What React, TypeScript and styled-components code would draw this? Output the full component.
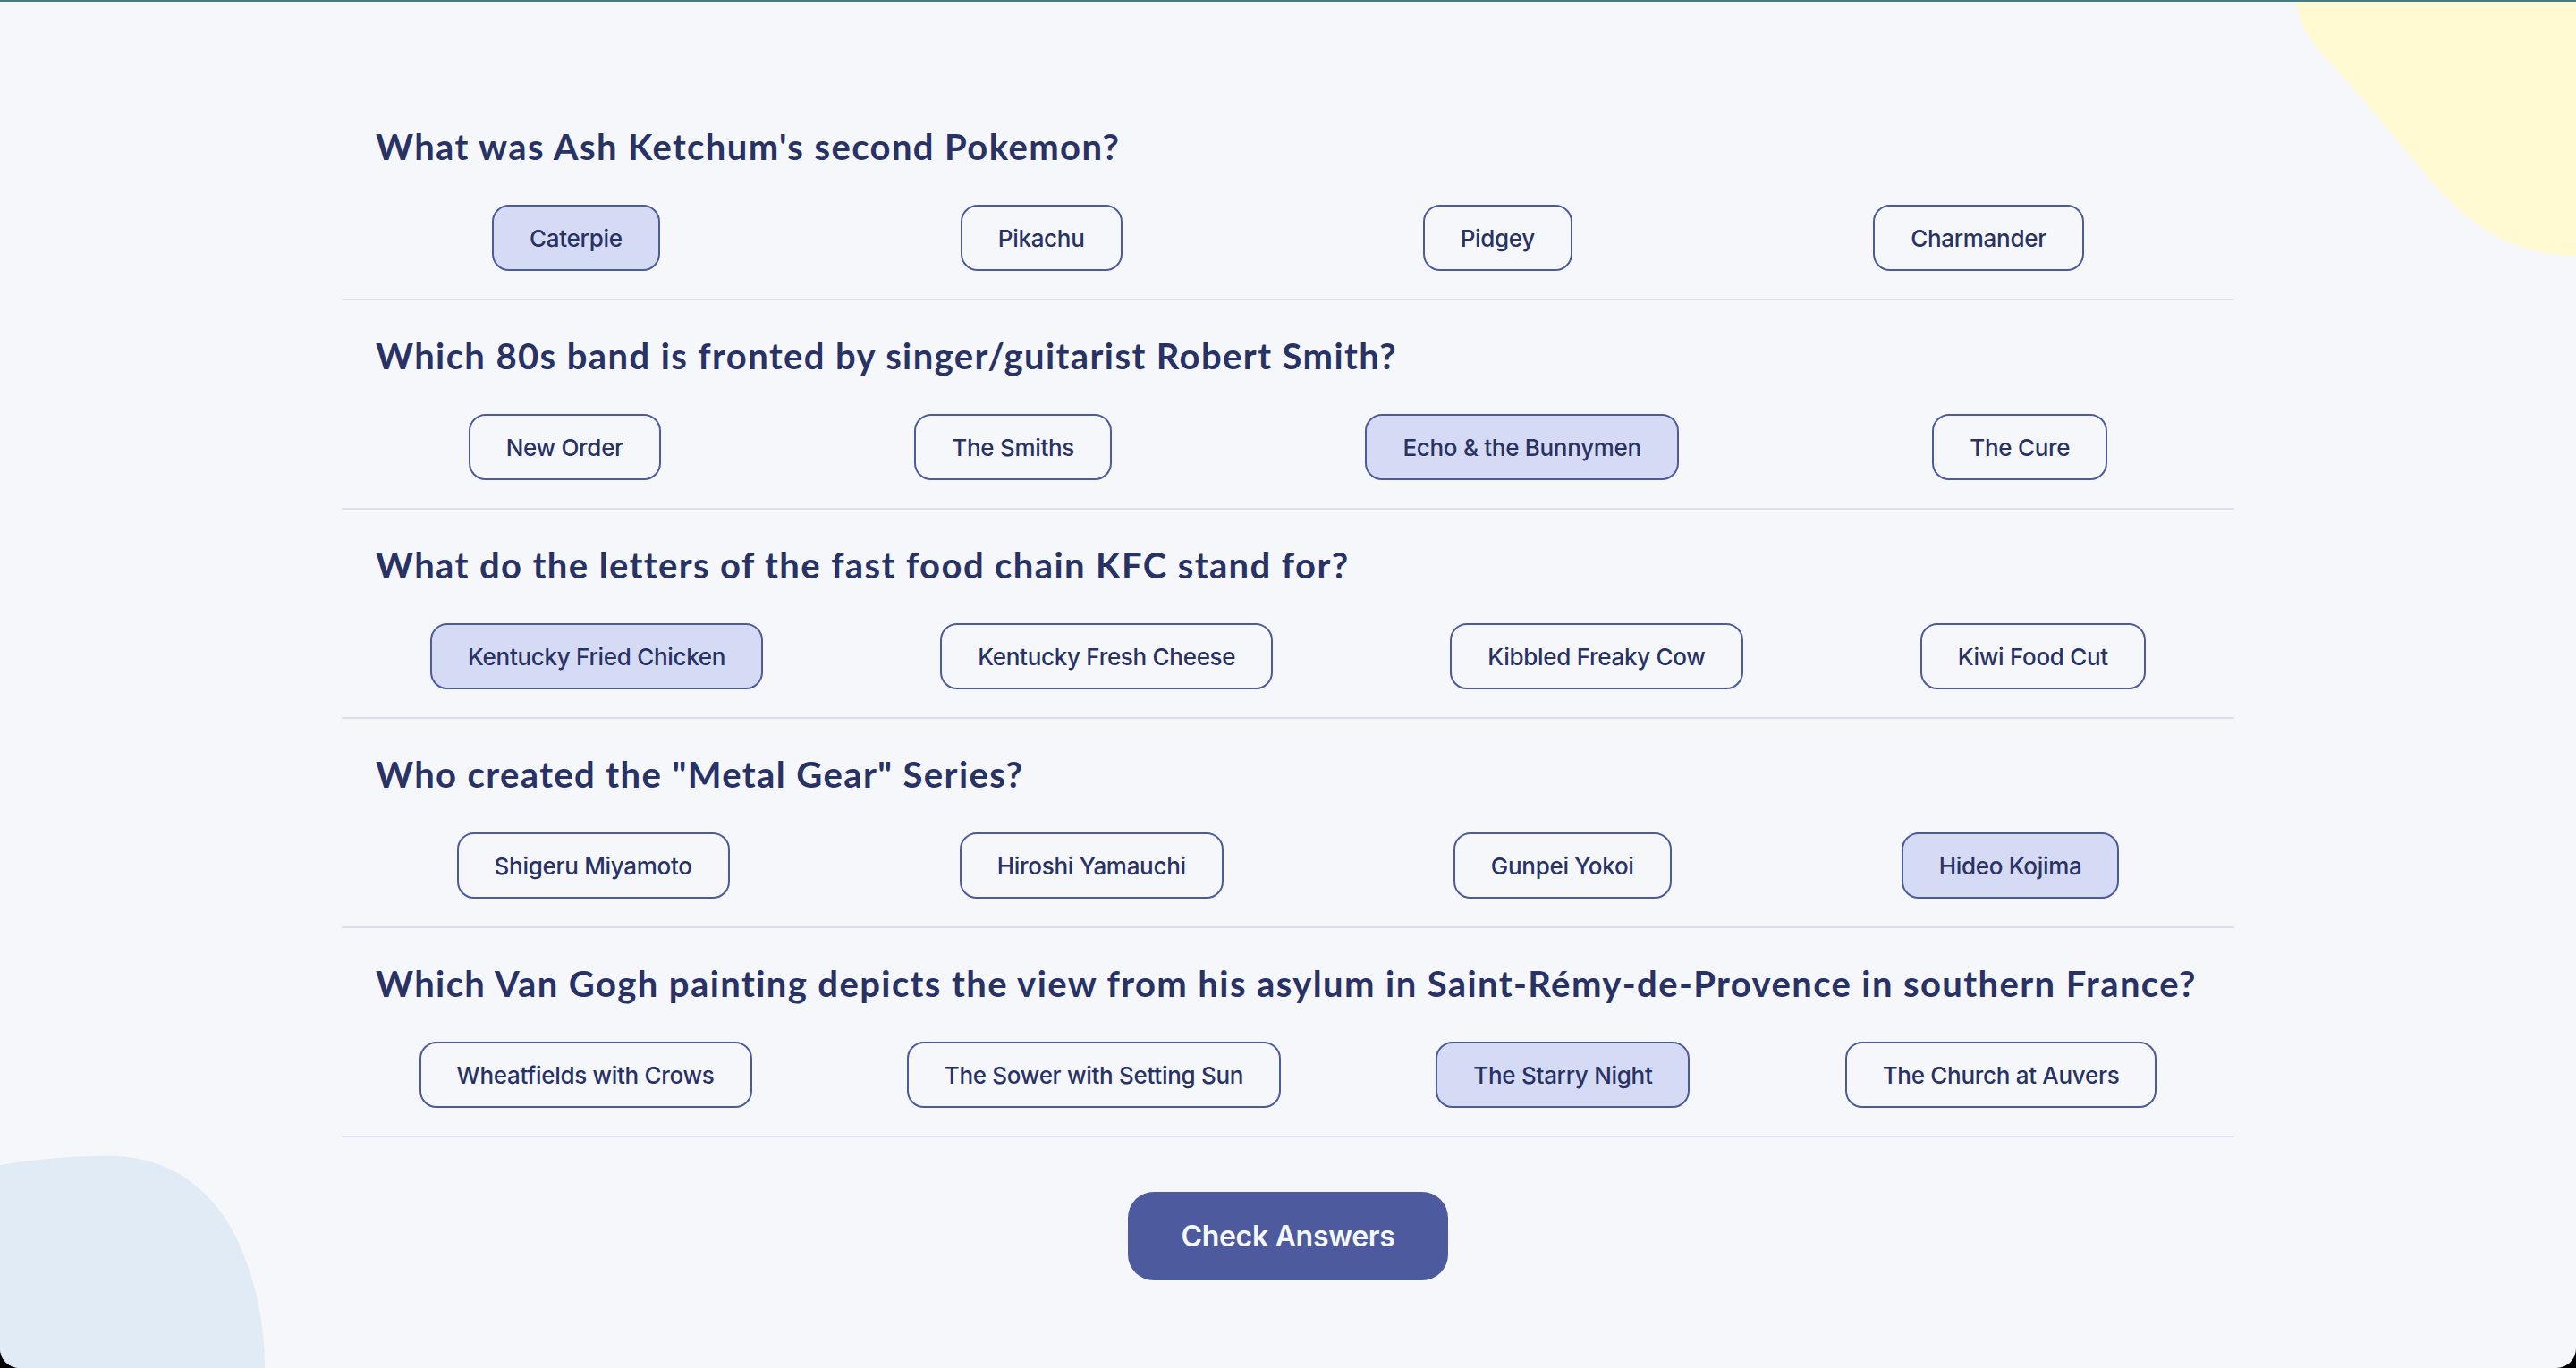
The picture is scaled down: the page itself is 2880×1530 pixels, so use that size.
import React, { useState } from "react";
import styled, { createGlobalStyle } from "styled-components";

const GlobalStyle = createGlobalStyle`
  html, body {
    margin: 0;
    padding: 0;
    background: #000;
  }
  * { box-sizing: border-box; }
`;

const Page = styled.main`
  position: relative;
  width: 2880px;
  height: 1530px;
  overflow: hidden;
  background: #f5f7fb;
  border-top: 2px solid #4a7b83;
  border-radius: 0 0 22px 22px;
  padding-top: 100px;
  display: flex;
  flex-direction: column;
  align-items: center;
`;

const BlobTopRight = styled.svg`
  position: absolute;
  top: 0;
  right: 0;
  width: 320px;
  height: 290px;
`;

const BlobBottomLeft = styled.svg`
  position: absolute;
  left: 0;
  bottom: 0;
  width: 300px;
  height: 240px;
`;

const Quiz = styled.section`
  position: relative;
  z-index: 1;
  width: 2116px;
  display: flex;
  flex-direction: column;
`;

const Question = styled.div`
  padding: 38px 0 31px;
  border-bottom: 2px solid #dbdef0;
  display: flex;
  flex-direction: column;
  gap: 41px;
`;

const Heading = styled.h2`
  margin: 0;
  padding-left: 38px;
  font-family: "Lato", "Noto Sans", sans-serif;
  font-weight: 700;
  font-size: 40px;
  line-height: 48px;
  color: #293264;
  letter-spacing: 1.4px;
`;

const Answers = styled.div`
  display: flex;
  justify-content: space-around;
  align-items: center;
`;

const Answer = styled.button<{ $selected: boolean }>`
  height: 74px;
  padding: 0 40px;
  border: 2px solid #4d5b9e;
  border-radius: 19px;
  background: ${(p) => (p.$selected ? "#d6dbf5" : "transparent")};
  color: #293264;
  font-family: "Inter", "Noto Sans", sans-serif;
  font-weight: 500;
  font-size: 26px;
  letter-spacing: -0.3px;
  line-height: 33px;
  cursor: pointer;
  white-space: nowrap;
`;

const CheckButton = styled.button`
  position: relative;
  z-index: 1;
  margin-top: 61px;
  width: 358px;
  height: 99px;
  border: none;
  border-radius: 29px;
  background: #4d5b9e;
  color: #f5f7fb;
  font-family: "Inter", "Noto Sans", sans-serif;
  font-weight: 600;
  font-size: 32px;
  letter-spacing: -0.3px;
  cursor: pointer;
`;

const questions = [
  {
    q: "What was Ash Ketchum's second Pokemon?",
    a: ["Caterpie", "Pikachu", "Pidgey", "Charmander"],
    s: 0,
  },
  {
    q: "Which 80s band is fronted by singer/guitarist Robert Smith?",
    a: ["New Order", "The Smiths", "Echo & the Bunnymen", "The Cure"],
    s: 2,
  },
  {
    q: "What do the letters of the fast food chain KFC stand for?",
    a: ["Kentucky Fried Chicken", "Kentucky Fresh Cheese", "Kibbled Freaky Cow", "Kiwi Food Cut"],
    s: 0,
  },
  {
    q: 'Who created the "Metal Gear" Series?',
    a: ["Shigeru Miyamoto", "Hiroshi Yamauchi", "Gunpei Yokoi", "Hideo Kojima"],
    s: 3,
  },
  {
    q: "Which Van Gogh painting depicts the view from his asylum in Saint-Rémy-de-Provence in southern France?",
    a: ["Wheatfields with Crows", "The Sower with Setting Sun", "The Starry Night", "The Church at Auvers"],
    s: 2,
  },
];

export default function App() {
  const [sel, setSel] = useState<number[]>(questions.map((q) => q.s));
  return (
    <>
      <GlobalStyle />
      <Page>
        <BlobTopRight viewBox="0 0 320 290" aria-hidden>
          <path
            d="M8,0 C8,35 44,65 74,100 L158,200 C201,250 250,284 320,284 L320,0 Z"
            fill="#fffad1"
          />
        </BlobTopRight>
        <BlobBottomLeft viewBox="0 0 300 240" aria-hidden>
          <path
            d="M0,13 C40,6 90,2 130,3 C200,6 250,50 275,120 C290,160 296,200 296,240 L0,240 Z"
            fill="#e1ebf6"
          />
        </BlobBottomLeft>
        <Quiz>
          {questions.map((item, qi) => (
            <Question key={qi}>
              <Heading>{item.q}</Heading>
              <Answers>
                {item.a.map((ans, ai) => (
                  <Answer
                    key={ans}
                    $selected={sel[qi] === ai}
                    onClick={() =>
                      setSel((prev) => prev.map((v, i) => (i === qi ? ai : v)))
                    }
                  >
                    {ans}
                  </Answer>
                ))}
              </Answers>
            </Question>
          ))}
        </Quiz>
        <CheckButton>Check Answers</CheckButton>
      </Page>
    </>
  );
}
